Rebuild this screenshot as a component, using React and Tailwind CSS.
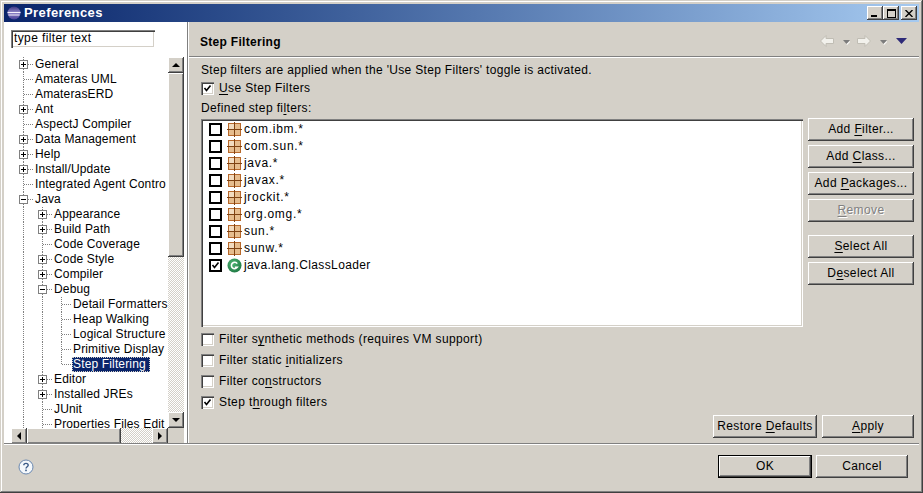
const raised = "shadow-[inset_-1px_-1px_0_#404040,inset_1px_1px_0_#fff,inset_-2px_-2px_0_#808080]"
const sunken = "shadow-[inset_1px_1px_0_#808080,inset_2px_2px_0_#404040,inset_-1px_-1px_0_#fff,inset_-2px_-2px_0_#d4d0c8]"
const checker = "bg-[repeating-conic-gradient(#fff_0_25%,#d4d0c8_0_50%)] bg-[length:2px_2px]"

const treeRows = [
  { d: 0, label: "General", exp: "+" },
  { d: 0, label: "Amateras UML" },
  { d: 0, label: "AmaterasERD" },
  { d: 0, label: "Ant", exp: "+" },
  { d: 0, label: "AspectJ Compiler" },
  { d: 0, label: "Data Management", exp: "+" },
  { d: 0, label: "Help", exp: "+" },
  { d: 0, label: "Install/Update", exp: "+" },
  { d: 0, label: "Integrated Agent Contro" },
  { d: 0, label: "Java", exp: "-" },
  { d: 1, label: "Appearance", exp: "+" },
  { d: 1, label: "Build Path", exp: "+" },
  { d: 1, label: "Code Coverage" },
  { d: 1, label: "Code Style", exp: "+" },
  { d: 1, label: "Compiler", exp: "+" },
  { d: 1, label: "Debug", exp: "-" },
  { d: 2, label: "Detail Formatters" },
  { d: 2, label: "Heap Walking" },
  { d: 2, label: "Logical Structure" },
  { d: 2, label: "Primitive Display" },
  { d: 2, label: "Step Filtering", selected: true, last: true },
  { d: 1, label: "Editor", exp: "+" },
  { d: 1, label: "Installed JREs", exp: "+" },
  { d: 1, label: "JUnit" },
  { d: 1, label: "Properties Files Edit" },
]

const filters = ["com.ibm.*", "com.sun.*", "java.*", "javax.*", "jrockit.*", "org.omg.*", "sun.*", "sunw.*"]

function Ul({ text, u }) {
  // underline the mnemonic letter at index u
  if (u === undefined) return text
  return (
    <>
      {text.slice(0, u)}
      <span className="underline underline-offset-2">{text[u]}</span>
      {text.slice(u + 1)}
    </>
  )
}

function Guide({ kind, exp }) {
  return (
    <svg width="19" height="15" className="shrink-0 block">
      <g stroke="#808080" strokeDasharray="1 1" fill="none">
        {kind === "line" && <path d="M9.5 0V15" />}
        {kind === "tee" && <path d="M9.5 0V15M10 7.5H19" />}
        {kind === "elbow" && <path d="M9.5 0V8M10 7.5H19" />}
      </g>
      {exp && (
        <g>
          <rect x="5.5" y="3.5" width="8" height="8" fill="#fff" stroke="#808080" />
          <path d={exp === "+" ? "M7 7.5H12M9.5 5V10" : "M7 7.5H12"} stroke="#000" />
        </g>
      )}
    </svg>
  )
}

function TreeRow({ row }) {
  const cols = []
  if (row.d === 0) {
    cols.push(<Guide key="0" kind="tee" exp={row.exp} />)
  } else {
    cols.push(<Guide key="0" kind="line" />)
    if (row.d === 1) {
      cols.push(<Guide key="1" kind="tee" exp={row.exp} />)
    } else {
      cols.push(<Guide key="1" kind="line" />)
      cols.push(<Guide key="2" kind={row.last ? "elbow" : "tee"} />)
    }
  }
  return (
    <div className="flex h-[15px] items-center whitespace-nowrap">
      {cols}
      <span className={`h-[15px] leading-[15px] ml-[1px] pl-[1px] pr-[4px] ${row.selected ? "bg-[#0a246a] text-white outline outline-dotted outline-[#d4d0c8] -outline-offset-1" : ""}`}>
        {row.label}
      </span>
    </div>
  )
}

function Btn({ text, u, w = "w-[106px]", disabled, def }) {
  return (
    <div
      className={`${w} h-[23px] flex items-center justify-center bg-[#d4d0c8] ${raised} ${def ? "border border-black" : ""} ${disabled ? "text-[#808080] [text-shadow:1px_1px_0_#fff]" : "text-black"}`}
    >
      <span><Ul text={text} u={u} /></span>
    </div>
  )
}

function Arrow({ dir }) {
  const d = {
    up: "M4 1 L0 5 H8 Z",
    down: "M0 1 H8 L4 5 Z",
    left: "M5 0 L1 4 L5 8 Z",
    right: "M1 0 L5 4 L1 8 Z",
  }[dir]
  const wide = dir === "up" || dir === "down"
  return (
    <div className={`w-4 h-4 shrink-0 flex items-center justify-center bg-[#d4d0c8] ${raised}`}>
      <svg width={wide ? 8 : 6} height={wide ? 6 : 8}><path d={d} fill="#000" /></svg>
    </div>
  )
}

function PackageIcon() {
  return (
    <svg width="15" height="15" viewBox="0 0 15 15" className="shrink-0 block">
      <rect x="1.5" y="1.5" width="12" height="12" fill="#e6bd8e" stroke="#b8682a" />
      <rect x="2" y="2" width="5" height="5" fill="#f2dcc0" />
      <path d="M7.5 0V15M0 7.5H15" stroke="#7e4212" />
    </svg>
  )
}

function ClassIcon() {
  return (
    <svg width="15" height="15" viewBox="0 0 15 15" className="shrink-0 block">
      <defs>
        <radialGradient id="classFill" cx="0.4" cy="0.35" r="0.8">
          <stop offset="0" stopColor="#4fb474" />
          <stop offset="1" stopColor="#17703c" />
        </radialGradient>
      </defs>
      <circle cx="7.5" cy="7.5" r="7" fill="url(#classFill)" />
      <path d="M10.2 5.6A3.2 3.2 0 1 0 10.2 9.4H7.8" fill="none" stroke="#fff" strokeWidth="1.6" />
    </svg>
  )
}

function ListCheck({ checked }) {
  return (
    <div className="w-[13px] h-[13px] shrink-0 border-2 border-black bg-white flex items-center justify-center">
      {checked && <svg width="9" height="9" viewBox="0 0 9 9"><path d="M1.5 4L3.5 6.5L7.5 1.5" fill="none" stroke="#000" strokeWidth="1.6" /></svg>}
    </div>
  )
}

function Check({ checked, text, u, h = "h-[21px]" }) {
  return (
    <div className={`flex items-center ${h}`}>
      <div className={`w-[13px] h-[13px] shrink-0 bg-white ${sunken} flex items-center justify-center`}>
        {checked && <svg width="9" height="9" viewBox="0 0 9 9"><path d="M1.5 4L3.5 6.5L7.5 1.5" fill="none" stroke="#000" strokeWidth="1.6" /></svg>}
      </div>
      <span className="ml-[5px]"><Ul text={text} u={u} /></span>
    </div>
  )
}

function NavArrow({ flip }) {
  return (
    <svg width="14" height="12" viewBox="0 0 14 12" className={flip ? "-scale-x-100 block" : "block"}>
      <path d="M0.5 6L6 0.5V3.5H13.5V8.5H6V11.5Z" fill="#f2f1ec" stroke="#c0bdb4" />
    </svg>
  )
}

function SmallCaret() {
  return (
    <svg width="7" height="5" viewBox="0 0 7 5" className="block mt-[2px]">
      <path d="M0 0H7L3.5 4Z" fill="#7c7c7c" />
      <path d="M3.5 4L7 1V2L4 5Z" fill="#fff" />
    </svg>
  )
}

function TitleButton({ children, cls = "" }) {
  return (
    <div className={`w-4 h-[14px] flex items-center justify-center bg-[#d4d0c8] ${raised} ${cls}`}>
      {children}
    </div>
  )
}

export default function App() {
  return (
    <div className="w-[923px] h-[493px] bg-[#d4d0c8] text-[12px] leading-[15px] tracking-[0.38px] text-black font-['Liberation_Sans',sans-serif] flex flex-col overflow-hidden shadow-[inset_-1px_-1px_0_#404040,inset_1px_1px_0_#d4d0c8,inset_-2px_-2px_0_#808080,inset_2px_2px_0_#fff] p-[4px]">
      {/* title bar */}
      <div className="h-[18px] shrink-0 flex items-center pl-[3px] pr-[2px] bg-gradient-to-r from-[#0a246a] to-[#a6caf0]">
        <svg width="14" height="14" viewBox="0 0 14 14" className="shrink-0">
          <defs>
            <linearGradient id="eclipseFill" x1="0" y1="0" x2="0" y2="1">
              <stop offset="0" stopColor="#3a3580" />
              <stop offset="0.45" stopColor="#8f86c8" />
              <stop offset="1" stopColor="#4a4098" />
            </linearGradient>
          </defs>
          <circle cx="7" cy="7" r="6.5" fill="url(#eclipseFill)" />
          <path d="M0.5 6.5H13.5M1.5 9H12.5" stroke="#f4f0fa" strokeWidth="1.1" />
        </svg>
        <span className="ml-[3px] -mt-[2px] font-bold text-white text-[13px] tracking-[0.4px]">Preferences</span>
        <div className="ml-auto flex items-center">
          <TitleButton>
            <div className="w-[6px] h-[2px] bg-black mt-[6px] -ml-[2px]" />
          </TitleButton>
          <TitleButton>
            <div className="w-[9px] h-[9px] border border-black border-t-2" />
          </TitleButton>
          <TitleButton cls="ml-[2px]">
            <svg width="8" height="7"><path d="M0.5 0L7.5 7M7.5 0L0.5 7" stroke="#000" strokeWidth="1.4" /></svg>
          </TitleButton>
        </div>
      </div>

      {/* main */}
      <div className="flex h-[421px] shrink-0">
        {/* left pane */}
        <div className="w-[184px] shrink-0 bg-white pl-[7px] pt-[8px] flex flex-col border-r border-[#808080]">
          <div className={`w-[144px] h-[18px] shrink-0 pl-[3px] leading-[17px] ${sunken} bg-white`}>type filter text</div>
          <div className="flex mt-[9px] h-[371px]">
            <div className="w-[157px] h-[371px] overflow-hidden pl-[3px] tracking-[0.15px]">
              {treeRows.map((row) => (
                <TreeRow key={row.label} row={row} />
              ))}
            </div>
            <div className={`w-4 flex flex-col ${checker}`}>
              <Arrow dir="up" />
              <div className={`h-[184px] bg-[#d4d0c8] ${raised}`} />
              <div className="flex-1" />
              <Arrow dir="down" />
            </div>
          </div>
          <div className="flex h-4">
            <div className={`w-[157px] flex ${checker}`}>
              <Arrow dir="left" />
              <div className={`w-[94px] bg-[#d4d0c8] ${raised}`} />
              <div className="flex-1" />
              <Arrow dir="right" />
            </div>
            <div className="w-4 bg-[#d4d0c8]" />
          </div>
        </div>

        {/* right pane */}
        <div className="flex-1 border-l border-white flex flex-col min-w-0">
          <div className="h-[35px] shrink-0 flex items-center pl-[11px] pr-[12px] pt-[4px] border-b border-[#808080] shadow-[0_1px_0_#fff]">
            <span className="font-bold tracking-[0.3px] mt-[3px]">Step Filtering</span>
            <div className="ml-auto flex items-center">
              <NavArrow />
              <span className="ml-[9px]"><SmallCaret /></span>
              <span className="ml-[7px]"><NavArrow flip /></span>
              <span className="ml-[9px]"><SmallCaret /></span>
              <svg width="11" height="6" viewBox="0 0 11 6" className="ml-[9px] block">
                <path d="M0 0H11L5.5 6Z" fill="#2e2a78" />
              </svg>
            </div>
          </div>
          <div className="pl-[12px] pr-[5px] pt-[6px] flex-1 flex flex-col">
            <div className="h-[15px] tracking-[0.32px]">Step filters are applied when the 'Use Step Filters' toggle is activated.</div>
            <Check checked text="Use Step Filters" u={0} />
            <div className="h-[16px] mt-[2px]"><Ul text="Defined step filters:" u={15} /></div>
            <div className="flex mt-[2px] h-[208px] shrink-0">
              <div className={`w-[602px] bg-white ${sunken} pl-[8px] pt-[2px]`}>
                {filters.map((f) => (
                  <div key={f} className="flex items-center h-[17px]">
                    <ListCheck />
                    <span className="ml-[5px]"><PackageIcon /></span>
                    <span className="ml-[2px] tracking-[0.7px]">{f}</span>
                  </div>
                ))}
                <div className="flex items-center h-[17px]">
                  <ListCheck checked />
                  <span className="ml-[5px]"><ClassIcon /></span>
                  <span className="ml-[2px]">java.lang.ClassLoader</span>
                </div>
              </div>
              <div className="ml-[5px] flex flex-col gap-[4px] -mt-[1px]">
                <Btn text="Add Filter..." u={4} />
                <Btn text="Add Class..." u={4} />
                <Btn text="Add Packages..." u={4} />
                <Btn text="Remove" u={0} disabled />
                <div className="h-[5px]" />
                <Btn text="Select All" u={0} />
                <Btn text="Deselect All" u={1} />
              </div>
            </div>
            <div className="mt-[2px]">
              <Check text="Filter synthetic methods (requires VM support)" u={8} />
              <Check text="Filter static initializers" u={14} />
              <Check text="Filter constructors" u={9} />
              <Check checked text="Step through filters" u={6} />
            </div>
            <div className="flex justify-end gap-[5px] mt-[2px]">
              <Btn text="Restore Defaults" u={8} w="w-[104px]" />
              <Btn text="Apply" u={0} w="w-[92px]" />
            </div>
          </div>
        </div>
      </div>

      {/* bottom bar */}
      <div className="flex-1 border-t border-[#808080] shadow-[inset_0_1px_0_#fff] flex items-center pl-[14px] pr-[11px]">
        <svg width="16" height="16" viewBox="0 0 16 16">
          <circle cx="8" cy="8" r="7" fill="#f4f8fc" stroke="#6a88b0" />
          <path d="M5.8 6.2C5.8 3.8 10.2 3.8 10.2 6.2C10.2 7.8 8 7.8 8 9.6" fill="none" stroke="#3a5a88" strokeWidth="1.4" />
          <rect x="7.2" y="10.6" width="1.6" height="1.6" fill="#3a5a88" />
        </svg>
        <div className="ml-auto flex gap-[4px]">
          <Btn text="OK" w="w-[94px]" def />
          <Btn text="Cancel" w="w-[92px]" />
        </div>
      </div>
    </div>
  )
}
